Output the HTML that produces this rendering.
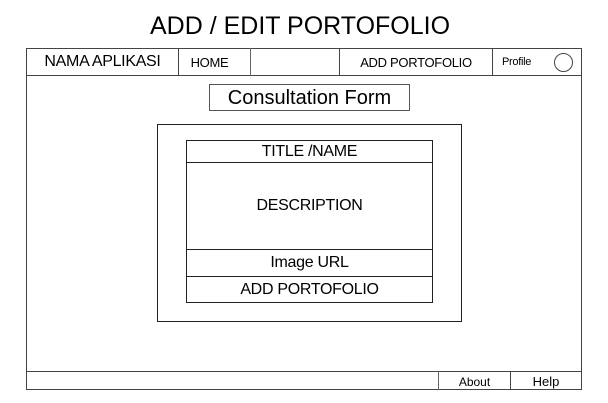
<!DOCTYPE html>
<html><head><style>
*{margin:0;padding:0;box-sizing:border-box}
body{width:608px;height:403px;background:#fff;position:relative;font-family:"Liberation Sans",sans-serif;color:#000;overflow:hidden}
.a{position:absolute}
.b{position:absolute;border:1px solid #333}
.t{position:absolute;text-align:center;white-space:nowrap}
</style></head><body>
<div class="t" style="left:0;width:600px;top:11px;font-size:25px;line-height:30px">ADD / EDIT PORTOFOLIO</div>
<div class="b" style="left:26px;top:48px;width:556px;height:342px;border-color:#444"></div>
<div class="a" style="left:26px;top:75px;width:556px;height:1px;background:#444"></div>
<div class="a" style="left:178px;top:48px;width:1px;height:28px;background:#444"></div>
<div class="a" style="left:250px;top:48px;width:1px;height:28px;background:#666"></div>
<div class="a" style="left:339px;top:48px;width:1px;height:28px;background:#444"></div>
<div class="a" style="left:492px;top:48px;width:1px;height:28px;background:#444"></div>
<div class="t" style="left:27px;width:151px;top:52px;font-size:16px;line-height:20px;letter-spacing:-0.3px">NAMA APLIKASI</div>
<div class="t" style="left:174px;width:71px;top:54px;font-size:13px;line-height:18px;letter-spacing:-0.3px">HOME</div>
<div class="t" style="left:340px;width:152px;top:54px;font-size:13px;line-height:18px;letter-spacing:-0.3px">ADD PORTOFOLIO</div>
<div class="t" style="left:502px;top:54px;font-size:11px;line-height:16px;letter-spacing:-0.3px">Profile</div>
<div class="a" style="left:554px;top:53px;width:19px;height:19px;border:1px solid #444;border-radius:50%"></div>
<div class="b" style="left:209px;top:84px;width:201px;height:27px;border-color:#555"></div>
<div class="t" style="left:209px;width:201px;top:86px;font-size:20px;line-height:24px">Consultation Form</div>
<div class="b" style="left:157px;top:124px;width:305px;height:198px;border-color:#222"></div>
<div class="b" style="left:186px;top:140px;width:247px;height:163px;border-color:#222"></div>
<div class="a" style="left:186px;top:162px;width:247px;height:1px;background:#222"></div>
<div class="a" style="left:186px;top:249px;width:247px;height:1px;background:#222"></div>
<div class="a" style="left:186px;top:276px;width:247px;height:1px;background:#222"></div>
<div class="t" style="left:186px;width:247px;top:141px;font-size:16px;line-height:21px;letter-spacing:-0.3px">TITLE /NAME</div>
<div class="t" style="left:186px;width:247px;top:196px;font-size:16px;line-height:20px;letter-spacing:-0.3px">DESCRIPTION</div>
<div class="t" style="left:186px;width:247px;top:253px;font-size:16px;line-height:20px;letter-spacing:-0.3px">Image URL</div>
<div class="t" style="left:186px;width:247px;top:280px;font-size:16px;line-height:20px;letter-spacing:-0.3px">ADD PORTOFOLIO</div>
<div class="a" style="left:26px;top:371px;width:556px;height:1px;background:#444"></div>
<div class="a" style="left:438px;top:371px;width:1px;height:19px;background:#666"></div>
<div class="a" style="left:510px;top:371px;width:1px;height:19px;background:#444"></div>
<div class="t" style="left:439px;width:71px;top:375px;font-size:12px;line-height:15px">About</div>
<div class="t" style="left:511px;width:70px;top:374px;font-size:13px;line-height:16px">Help</div>
</body></html>
